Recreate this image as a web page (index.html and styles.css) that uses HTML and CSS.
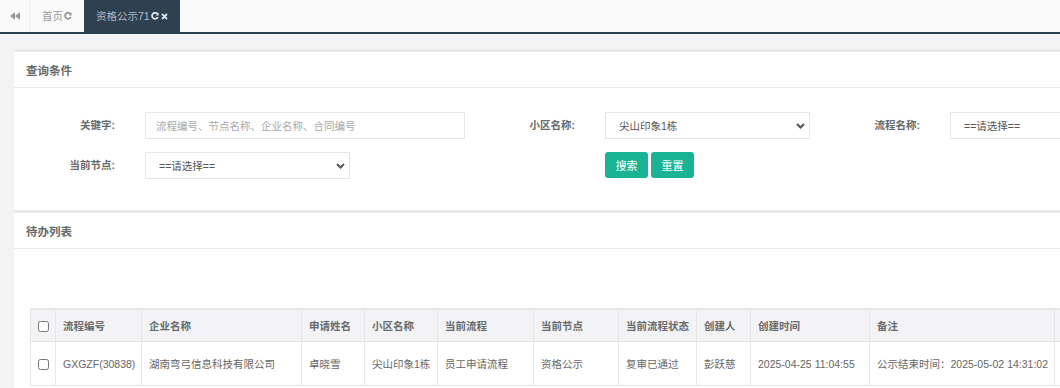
FILE: index.html
```html
<!DOCTYPE html>
<html lang="zh-CN">
<head>
    <meta charset="UTF-8">
    <meta name="viewport" content="width=device-width, initial-scale=1.0">
    <title>资格公示</title>
    <link rel="stylesheet" href="styles.css">
</head>
<body>
    <!-- Tab bar -->
    <div class="tabbar">
        <a class="tab-nav" href="#">
            <svg width="10" height="8" viewBox="0 0 10 8"><path d="M5 0 L0 4 L5 8 Z M10 0 L5 4 L10 8 Z" fill="#999"/></svg>
        </a>
        <a class="tab" href="#">首页<svg class="ico" width="8" height="8" viewBox="0 0 8 8"><path d="M6.6 2.2 A3 3 0 1 0 6.8 5" fill="none" stroke="currentColor" stroke-width="1.8"/><path d="M7.6 0.4 L7.6 3.4 L4.8 3.4 Z" fill="currentColor"/></svg></a>
        <a class="tab active" href="#">资格公示71<svg class="ico" width="8" height="8" viewBox="0 0 8 8"><path d="M6.6 2.2 A3 3 0 1 0 6.8 5" fill="none" stroke="currentColor" stroke-width="1.8"/><path d="M7.6 0.4 L7.6 3.4 L4.8 3.4 Z" fill="currentColor"/></svg><svg class="ico close" width="7" height="7" viewBox="0 0 7 7"><path d="M1 1 L6 6 M6 1 L1 6" stroke="currentColor" stroke-width="1.8"/></svg></a>
    </div>

    <div class="page">
        <!-- Search -->
        <div class="ibox">
            <div class="ibox-title"><h5>查询条件</h5></div>
            <div class="ibox-content search">
                <form class="search-form">
                    <label>关键字:</label>
                    <input type="text" placeholder="流程编号、节点名称、企业名称、合同编号">

                    <label>小区名称:</label>
                    <div class="select-wrap">
                        <select><option>尖山印象1栋</option></select>
                        <svg class="chevron" width="9" height="6" viewBox="0 0 9 6"><path d="M1 1 L4.5 4.5 L8 1" fill="none" stroke="#555" stroke-width="2"/></svg>
                    </div>

                    <label>流程名称:</label>
                    <div class="select-wrap">
                        <select><option>==请选择==</option></select>
                        <svg class="chevron" width="9" height="6" viewBox="0 0 9 6"><path d="M1 1 L4.5 4.5 L8 1" fill="none" stroke="#555" stroke-width="2"/></svg>
                    </div>

                    <label>当前节点:</label>
                    <div class="select-wrap short">
                        <select><option>==请选择==</option></select>
                        <svg class="chevron" width="9" height="6" viewBox="0 0 9 6"><path d="M1 1 L4.5 4.5 L8 1" fill="none" stroke="#555" stroke-width="2"/></svg>
                    </div>

                    <div class="btns">
                        <button type="button" class="btn">搜索</button>
                        <button type="button" class="btn">重置</button>
                    </div>
                </form>
            </div>
        </div>

        <!-- Todo list -->
        <div class="ibox">
            <div class="ibox-title"><h5>待办列表</h5></div>
            <div class="ibox-content list">
                <table class="grid">
                    <colgroup>
                        <col style="width:25px"><col style="width:86px"><col style="width:160px"><col style="width:63px">
                        <col style="width:73px"><col style="width:96px"><col style="width:85px"><col style="width:78px">
                        <col style="width:54px"><col style="width:119px"><col style="width:185px"><col style="width:90px">
                    </colgroup>
                    <thead>
                        <tr>
                            <th class="chk"><input type="checkbox"></th>
                            <th>流程编号</th>
                            <th>企业名称</th>
                            <th>申请姓名</th>
                            <th>小区名称</th>
                            <th>当前流程</th>
                            <th>当前节点</th>
                            <th>当前流程状态</th>
                            <th>创建人</th>
                            <th>创建时间</th>
                            <th>备注</th>
                            <th></th>
                        </tr>
                    </thead>
                    <tbody>
                        <tr>
                            <td class="chk"><input type="checkbox"></td>
                            <td>GXGZF(30838)</td>
                            <td>湖南弯弓信息科技有限公司</td>
                            <td>卓晓雪</td>
                            <td>尖山印象1栋</td>
                            <td>员工申请流程</td>
                            <td>资格公示</td>
                            <td>复审已通过</td>
                            <td>彭跃慈</td>
                            <td>2025-04-25 11:04:55</td>
                            <td>公示结束时间：2025-05-02 14:31:02</td>
                            <td></td>
                        </tr>
                    </tbody>
                </table>
            </div>
        </div>
    </div>
</body>
</html>
```

FILE: styles.css
```css
body {
    margin: 0;
    padding: 0;
    background: #f3f3f4;
    font-family: "Liberation Sans", "Noto Sans CJK SC", sans-serif;
    font-size: 10.5px;
    color: #676a6c;
    overflow: hidden;
}

/* Tab bar */
.tabbar {
    display: flex;
    height: 32px;
    background: #fafafa;
    border-bottom: 2px solid #2f4050;
}

.tabbar a {
    text-decoration: none;
}

.tab-nav {
    width: 29px;
    border-right: 1px solid #eee;
    display: flex;
    align-items: center;
    justify-content: center;
}

.tab {
    display: flex;
    align-items: center;
    padding: 0 12px;
    color: #999;
    line-height: 32px;
}

.tab .ico {
    margin-left: 1px;
    color: #999;
}

.tab.active {
    background: #2f4050;
    color: #b4bcc8;
}

.tab.active .ico {
    color: #dde2e8;
}

.tab .close {
    margin-left: 2px;
}

/* Page */
.page {
    padding: 15px 0 0 14px;
    width: 1120px;
}

.ibox-title {
    background: #fff;
    border-top: 3px solid #e7eaec;
    border-bottom: 1px solid #e7eaec;
    height: 35px;
    padding: 0 12px;
    display: flex;
    align-items: center;
}

.ibox-title h5 {
    margin: 0;
    font-size: 11.5px;
    font-weight: bold;
    color: #676a6c;
}

.ibox-content {
    background: #fff;
}

/* Search form */
.search {
    padding: 24px 0 31px;
}

.search-form {
    display: grid;
    grid-template-columns: 131px 320px 140px 205px 140px 205px;
    grid-auto-rows: 27px;
    row-gap: 13px;
}

.search-form label {
    text-align: right;
    padding-right: 30px;
    font-weight: bold;
    line-height: 27px;
    color: #676a6c;
}

.search-form input[type="text"] {
    box-sizing: border-box;
    height: 27px;
    border: 1px solid #e5e6e7;
    padding: 0 10px;
    font: inherit;
    color: #676a6c;
    outline: none;
}

.search-form input::placeholder {
    color: #a9a9a9;
}

.select-wrap {
    position: relative;
}

.select-wrap.short {
    width: 205px;
}

.select-wrap select {
    box-sizing: border-box;
    appearance: none;
    width: 100%;
    height: 27px;
    border: 1px solid #e5e6e7;
    background: #fff;
    padding: 0 13px;
    font: inherit;
    color: #555;
    outline: none;
}

.chevron {
    position: absolute;
    right: 5px;
    top: 11px;
    pointer-events: none;
}

.btns {
    grid-column: 4;
    display: flex;
    gap: 3px;
}

.btn {
    width: 43px;
    height: 26px;
    border: none;
    border-radius: 3px;
    background: #1ab394;
    color: #fff;
    font: inherit;
    font-size: 11px;
    cursor: pointer;
}

/* List */
.list {
    padding: 59px 16px 20px;
}

.grid {
    border-collapse: collapse;
    table-layout: fixed;
    width: 1114px;
    border-top: 2px solid #e7e7e7;
}

.grid th,
.grid td {
    border: 1px solid #e7e7e7;
    padding: 0 7px;
    text-align: left;
    white-space: nowrap;
    overflow: hidden;
}

.grid th {
    height: 31px;
    background: #f3f3f5;
    font-weight: bold;
    color: #676a6c;
}

.grid td {
    height: 43px;
    color: #666;
}

.grid .chk {
    padding: 0;
    text-align: center;
}

.grid input[type="checkbox"] {
    width: 11px;
    height: 11px;
    margin: 0;
    vertical-align: middle;
}
```
